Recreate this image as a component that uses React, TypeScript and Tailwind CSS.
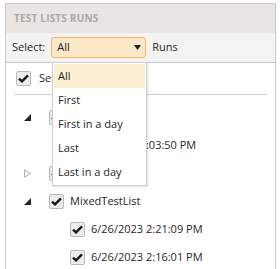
import React from "react"

const font = { fontFamily: '"Open Sans", "Liberation Sans", sans-serif' }

function Check() {
  return (
    <span className="flex h-[15px] w-[15px] shrink-0 items-center justify-center rounded-[2px] border border-[#b9b9b9] bg-[#ececec]">
      <svg width="11" height="9" viewBox="0 0 11 9">
        <path d="M1 4.6 L4 7.4 L10 1.4" fill="none" stroke="#1a1a1a" strokeWidth="2.4" />
      </svg>
    </span>
  )
}

function Expanded() {
  return (
    <svg width="7" height="7" viewBox="0 0 7 7" className="shrink-0">
      <path d="M7 0 L7 7 L0 7 Z" fill="#262626" />
    </svg>
  )
}

function Collapsed() {
  return (
    <svg width="7" height="9" viewBox="0 0 7 9" className="shrink-0">
      <path d="M0.5 0.7 L6.3 4.5 L0.5 8.3 Z" fill="none" stroke="#b0b0b0" strokeWidth="1" />
    </svg>
  )
}

type Node = { label: string; open: boolean; kids: string[] }

const groups: Node[] = [
  { label: "WebTests", open: true, kids: ["6/6/2023 3:03:50 PM"] },
  { label: "Smoke", open: false, kids: [] },
  { label: "MixedTestList", open: true, kids: ["6/26/2023 2:21:09 PM", "6/26/2023 2:16:01 PM"] },
]

const options = ["All", "First", "First in a day", "Last", "Last in a day"]

export default function App() {
  return (
    <div className="h-[269px] overflow-hidden bg-white pl-[5px] pr-[4px] pt-[3px] text-[11px] text-[#262626]" style={font}>
      <div className="h-[300px] border border-[#c9c9c9]">
        <div className="flex h-[29px] items-center bg-[#e8e5e2] pl-[8px] text-[10px] font-bold tracking-[0.2px] text-[#a9a9a9]">
          TEST LISTS RUNS
        </div>
        <div className="relative flex h-[30px] items-center border-b border-[#c9c9c9] bg-[#f3f3f3] pl-[6px]">
          <span>Select:</span>
          <div className="ml-[6px] flex h-[21px] w-[95px] items-center justify-between rounded-[3px] border border-[#f2b766] bg-[#fbe8c9] pl-[5px] pr-[4px]">
            <span>All</span>
            <svg width="7" height="5" viewBox="0 0 7 5">
              <path d="M0 0 L7 0 L3.5 5 Z" fill="#222" />
            </svg>
          </div>
          <span className="ml-[6px]">Runs</span>
          <div className="absolute left-[46px] top-[29px] z-10 w-[95px] border border-[#cfcfcf] bg-white p-px shadow-[1px_1px_2px_rgba(0,0,0,0.12)]">
            {options.map((o, i) => (
              <div key={o} className={`flex h-[24px] items-center pl-[4px] ${i === 0 ? "bg-[#fdf0d2]" : ""}`}>
                {o}
              </div>
            ))}
          </div>
        </div>
        <div className="px-[8px]">
          <div className="flex h-[32px] items-center gap-[8px] border-b border-[#cfcfcf] pl-[2px]">
            <Check />
            <span>Select all</span>
          </div>
          <div className="pt-[8px]">
            {groups.map((g) => (
              <div key={g.label}>
                <div className="flex h-[28px] items-center">
                  <div className="flex w-[35px] shrink-0 justify-end pr-[18px]">{g.open ? <Expanded /> : <Collapsed />}</div>
                  <Check />
                  <span className="ml-[6px]">{g.label}</span>
                </div>
                {g.open &&
                  g.kids.map((k) => (
                    <div key={k} className="flex h-[28px] items-center pl-[56px]">
                      <Check />
                      <span className="ml-[6px]">{k}</span>
                    </div>
                  ))}
              </div>
            ))}
          </div>
        </div>
      </div>
    </div>
  )
}
